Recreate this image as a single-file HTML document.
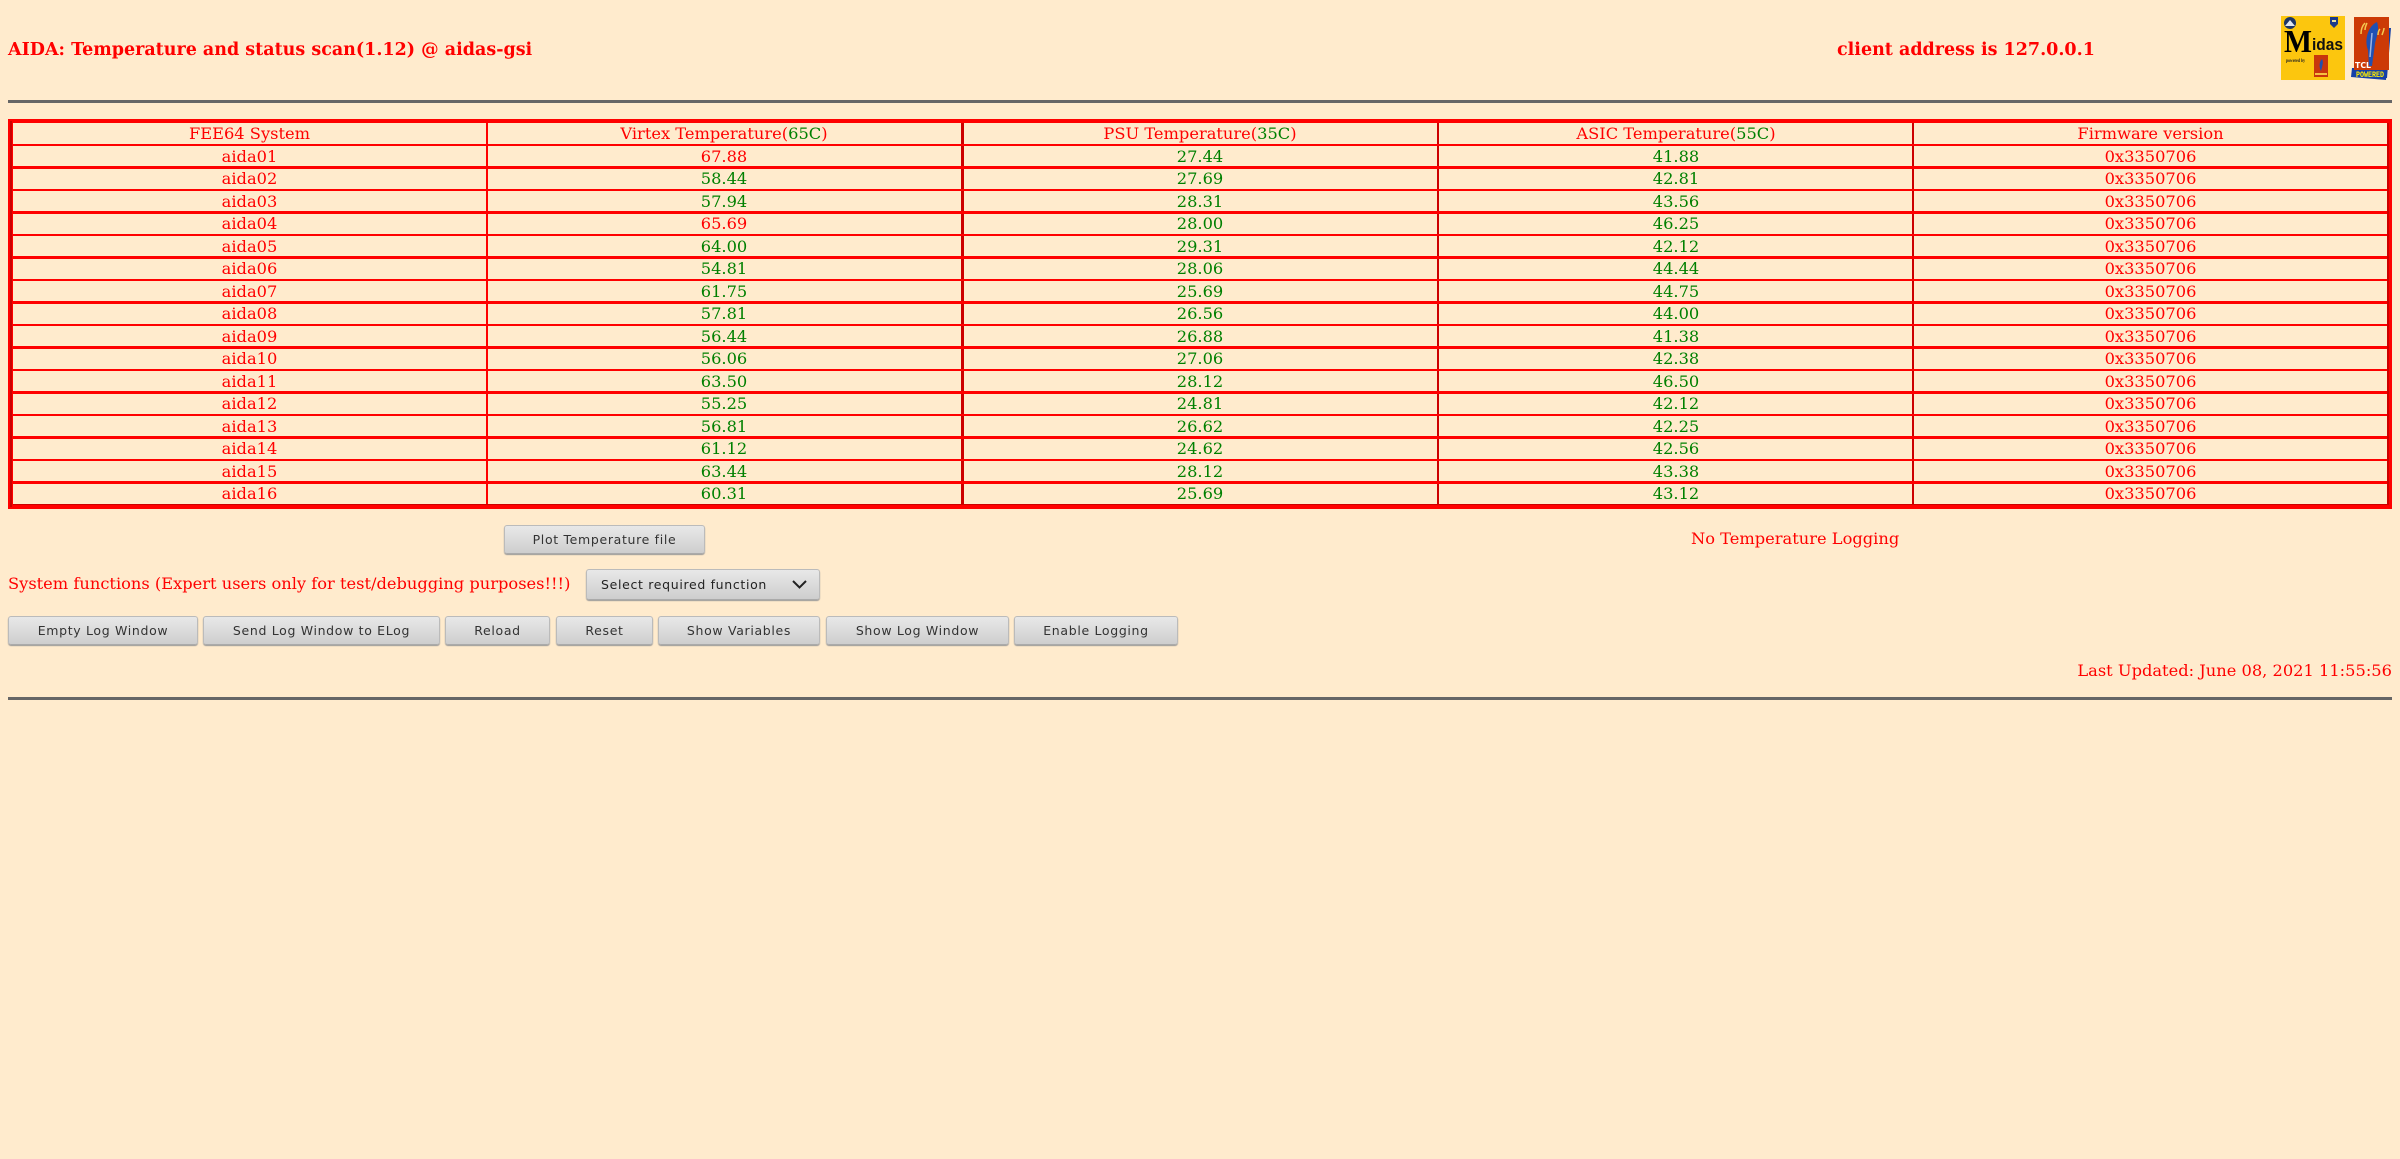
<!DOCTYPE html>
<html><head><meta charset="utf-8"><title>AIDA</title>
<style>
html,body{margin:0;padding:0;background:#ffebcd;width:2400px;height:1159px;overflow:hidden;position:relative;font-family:"DejaVu Serif","Liberation Serif",serif;color:#f00;font-size:16.25px}
.a{position:absolute;white-space:nowrap}
.l{position:absolute;background:#f00}
.d{background:#c00}
table{position:absolute;left:13px;top:123px;width:2374px;border-collapse:collapse;table-layout:fixed}
td{padding:0;height:22.5px;line-height:22.5px;text-align:center;color:#f00}
.g,td.g{color:#008000}
.hr{position:absolute;left:8px;width:2384px;height:3px;background:#666}
.b{position:absolute;box-sizing:border-box;height:29px;border:1px solid #bbb;border-bottom-color:#aaa;border-radius:3px;background:linear-gradient(#e8e8e8,#cecece);box-shadow:0 1px 1px #999;font:12.5px/28px "DejaVu Sans",sans-serif;letter-spacing:.67px;color:#333;text-align:center;white-space:nowrap}
</style></head><body>
<div class="a" style="left:8px;top:39px;font-size:17.5px;font-weight:bold;line-height:22px">AIDA: Temperature and status scan(1.12) @ aidas-gsi</div>
<div class="a" style="left:1837px;top:39px;font-size:17.5px;font-weight:bold;line-height:22px">client address is 127.0.0.1</div>

<svg class="a" style="left:2281px;top:16px" width="64" height="64" viewBox="0 0 64 64">
<rect width="64" height="64" fill="#fcc60e"/>
<circle cx="9" cy="7" r="6" fill="#1c3566"/><path d="M4 10 L9 4 L14 10Z" fill="#dfe6ee"/>
<path d="M49 1h8v7l-4 4-4-4z" fill="#1c3a8a"/><path d="M51 4h4v2h-4z" fill="#e8e0a0"/>
<text x="3" y="36" font-family="Liberation Serif,serif" font-weight="bold" font-size="32" fill="#000" textLength="28" lengthAdjust="spacingAndGlyphs">M</text>
<text x="31" y="34" font-family="Liberation Sans,sans-serif" font-weight="bold" font-size="17" fill="#111" textLength="31" lengthAdjust="spacingAndGlyphs">idas</text>
<text x="5" y="46" font-family="Liberation Serif,serif" font-weight="bold" font-size="5.500" fill="#222" textLength="19" lengthAdjust="spacingAndGlyphs">powered by</text>
<rect x="33" y="39" width="14" height="22" fill="#c8360c"/><path d="M41 43c2 3 0 8-1 12-2-4-2-9 1-12z" fill="#1f4fb0"/><rect x="34" y="57" width="12" height="2" fill="#f5c040"/>
</svg>

<svg class="a" style="left:2351px;top:16px" width="42" height="66" viewBox="0 0 42 66">
<path d="M34 12 L40 12 L36 62 L34 62 Z" fill="#1440a8"/>
<path d="M1 52 L36 52 L35 64 L0 61 Z" fill="#1440a8"/>
<rect x="3" y="1" width="35" height="53" fill="#cc3a06"/>
<path d="M26 6 C29 14 25 22 24 28 L21 50 L18 50 L17 34 C13 24 17 10 26 6Z" fill="#1f50b4"/>
<path d="M21 17l-2 24" stroke="#9fb4e0" stroke-width="1.5" fill="none"/>
<path d="M10 18c0-5 1-8 4-11M14 14c0-3 1-5 2-7M31 19c1-3 2-5 2-7M27 19c0-3 1-5 2-6" stroke="#f4c850" stroke-width="1.500" fill="none"/>
<text x="4" y="52" font-family="DejaVu Sans,sans-serif" font-weight="bold" font-size="7.500" fill="#fff" textLength="16" lengthAdjust="spacingAndGlyphs">TCL</text>
<text x="5" y="61" font-family="Liberation Mono,monospace" font-weight="bold" font-size="8" fill="#ffee00" textLength="28" lengthAdjust="spacingAndGlyphs">POWERED</text>
</svg>

<div class="hr" style="top:100px"></div>

<table><colgroup><col style="width:473px"><col style="width:476px"><col style="width:476px"><col style="width:476px"><col></colgroup>
<tr><td>FEE64 System</td><td>Virtex Temperature(<span class="g">65C</span>)</td><td>PSU Temperature(<span class="g">35C</span>)</td><td>ASIC Temperature(<span class="g">55C</span>)</td><td>Firmware version</td></tr>
<tr><td>aida01</td><td>67.88</td><td class="g">27.44</td><td class="g">41.88</td><td>0x3350706</td></tr>
<tr><td>aida02</td><td class="g">58.44</td><td class="g">27.69</td><td class="g">42.81</td><td>0x3350706</td></tr>
<tr><td>aida03</td><td class="g">57.94</td><td class="g">28.31</td><td class="g">43.56</td><td>0x3350706</td></tr>
<tr><td>aida04</td><td>65.69</td><td class="g">28.00</td><td class="g">46.25</td><td>0x3350706</td></tr>
<tr><td>aida05</td><td class="g">64.00</td><td class="g">29.31</td><td class="g">42.12</td><td>0x3350706</td></tr>
<tr><td>aida06</td><td class="g">54.81</td><td class="g">28.06</td><td class="g">44.44</td><td>0x3350706</td></tr>
<tr><td>aida07</td><td class="g">61.75</td><td class="g">25.69</td><td class="g">44.75</td><td>0x3350706</td></tr>
<tr><td>aida08</td><td class="g">57.81</td><td class="g">26.56</td><td class="g">44.00</td><td>0x3350706</td></tr>
<tr><td>aida09</td><td class="g">56.44</td><td class="g">26.88</td><td class="g">41.38</td><td>0x3350706</td></tr>
<tr><td>aida10</td><td class="g">56.06</td><td class="g">27.06</td><td class="g">42.38</td><td>0x3350706</td></tr>
<tr><td>aida11</td><td class="g">63.50</td><td class="g">28.12</td><td class="g">46.50</td><td>0x3350706</td></tr>
<tr><td>aida12</td><td class="g">55.25</td><td class="g">24.81</td><td class="g">42.12</td><td>0x3350706</td></tr>
<tr><td>aida13</td><td class="g">56.81</td><td class="g">26.62</td><td class="g">42.25</td><td>0x3350706</td></tr>
<tr><td>aida14</td><td class="g">61.12</td><td class="g">24.62</td><td class="g">42.56</td><td>0x3350706</td></tr>
<tr><td>aida15</td><td class="g">63.44</td><td class="g">28.12</td><td class="g">43.38</td><td>0x3350706</td></tr>
<tr><td>aida16</td><td class="g">60.31</td><td class="g">25.69</td><td class="g">43.12</td><td>0x3350706</td></tr>
</table>

<!-- outer frame -->
<div class="l" style="left:8px;top:119px;width:2384px;height:4px"></div>
<div class="l" style="left:8px;top:504px;width:2384px;height:5px"></div>
<div class="l d" style="left:13px;top:504px;width:2374px;height:1px"></div>
<div class="l" style="left:8px;top:119px;width:5px;height:390px"></div>
<div class="l d" style="left:10px;top:121px;width:2px;height:386px"></div>
<div class="l" style="left:2387px;top:119px;width:5px;height:390px"></div>
<div class="l d" style="left:2387px;top:123px;width:2px;height:382px"></div>
<!-- verticals -->
<div class="l" style="left:486px;top:123px;width:2px;height:381px"></div>
<div class="l d" style="left:961px;top:123px;width:3px;height:381px"></div>
<div class="l d" style="left:1437px;top:123px;width:2px;height:381px"></div>
<div class="l d" style="left:1912px;top:123px;width:2px;height:381px"></div>
<!-- rows -->
<div class="l" style="left:13px;top:144px;width:2374px;height:2px"></div>
<div class="l" style="left:13px;top:166px;width:2374px;height:3px"></div>
<div class="l" style="left:13px;top:189px;width:2374px;height:2px"></div>
<div class="l" style="left:13px;top:211px;width:2374px;height:3px"></div>
<div class="l" style="left:13px;top:234px;width:2374px;height:2px"></div>
<div class="l" style="left:13px;top:256px;width:2374px;height:3px"></div>
<div class="l" style="left:13px;top:279px;width:2374px;height:2px"></div>
<div class="l" style="left:13px;top:301px;width:2374px;height:3px"></div>
<div class="l" style="left:13px;top:324px;width:2374px;height:2px"></div>
<div class="l" style="left:13px;top:346px;width:2374px;height:3px"></div>
<div class="l" style="left:13px;top:369px;width:2374px;height:2px"></div>
<div class="l" style="left:13px;top:391px;width:2374px;height:3px"></div>
<div class="l" style="left:13px;top:414px;width:2374px;height:2px"></div>
<div class="l" style="left:13px;top:436px;width:2374px;height:3px"></div>
<div class="l" style="left:13px;top:459px;width:2374px;height:2px"></div>
<div class="l" style="left:13px;top:481px;width:2374px;height:3px"></div>

<div class="b" style="left:504px;top:525px;width:201px">Plot Temperature file</div>
<div class="a" style="left:1691px;top:528px;line-height:22px">No Temperature Logging</div>
<div class="a" style="left:8px;top:572.500px;line-height:22px">System functions (Expert users only for test/debugging purposes!!!)</div>
<div class="b" style="left:586px;top:569px;width:234px;height:31px;line-height:30px;text-align:left;padding-left:14px;color:#222">Select required function<svg style="position:absolute;left:204px;top:9px" width="17" height="11" viewBox="0 0 17 11"><path d="M2 2l6.500 6.500L15 2" fill="none" stroke="#222" stroke-width="2"/></svg></div>
<div class="b" style="left:8px;top:616px;width:190px">Empty Log Window</div>
<div class="b" style="left:203px;top:616px;width:237px">Send Log Window to ELog</div>
<div class="b" style="left:445px;top:616px;width:105px">Reload</div>
<div class="b" style="left:556px;top:616px;width:97px">Reset</div>
<div class="b" style="left:658px;top:616px;width:162px">Show Variables</div>
<div class="b" style="left:826px;top:616px;width:183px">Show Log Window</div>
<div class="b" style="left:1014px;top:616px;width:164px">Enable Logging</div>
<div class="a" style="right:8px;top:660px;line-height:22px">Last Updated: June 08, 2021 11:55:56</div>
<div class="hr" style="top:697px"></div>
</body></html>
